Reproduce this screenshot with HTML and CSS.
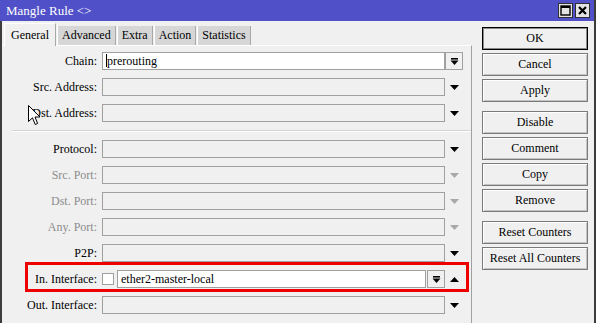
FILE: index.html
```html
<!DOCTYPE html>
<html lang="en">
<head>
    <meta charset="UTF-8">
    <title>Mangle Rule</title>
    <link rel="stylesheet" href="styles.css">
</head>
<body>
    <div class="window">
        <div class="titlebar">
            <span class="title">Mangle Rule &lt;&gt;</span>
            <div class="title-buttons">
                <span class="tbtn">
                    <svg width="11" height="11" viewBox="0 0 11 11"><rect x="1" y="1" width="9" height="9" fill="none" stroke="#000" stroke-width="1.4"/><rect x="1" y="1" width="9" height="2" fill="#000"/></svg>
                </span>
                <span class="tbtn">
                    <svg width="11" height="11" viewBox="0 0 11 11"><path d="M2 2 L9 9 M9 2 L2 9" stroke="#000" stroke-width="2.2"/></svg>
                </span>
            </div>
        </div>
        <div class="content">
            <div class="main">
                <div class="tabs">
                    <div class="tab active">General</div>
                    <div class="tab">Advanced</div>
                    <div class="tab">Extra</div>
                    <div class="tab">Action</div>
                    <div class="tab">Statistics</div>
                </div>
                <div class="panel">
                    <div class="row">
                        <label>Chain:</label>
                        <div class="field"><div class="input white"><span class="caret"></span>prerouting</div></div>
                        <div class="arrow"><span class="dropbtn"><svg width="9" height="9" viewBox="0 0 9 9"><rect x="1" y="1" width="7" height="1.6" fill="#000"/><path d="M0.5 3.5 H8.5 L4.5 8 Z" fill="#000"/></svg></span></div>
                    </div>
                    <div class="row">
                        <label>Src. Address:</label>
                        <div class="field"><div class="input"></div></div>
                        <div class="arrow"><svg width="9" height="5" viewBox="0 0 9 5"><path d="M0 0 H9 L4.5 5 Z" fill="#000"/></svg></div>
                    </div>
                    <div class="row">
                        <label>Dst. Address:</label>
                        <div class="field"><div class="input"></div></div>
                        <div class="arrow"><svg width="9" height="5" viewBox="0 0 9 5"><path d="M0 0 H9 L4.5 5 Z" fill="#000"/></svg></div>
                    </div>
                    <div class="separator"></div>
                    <div class="row">
                        <label>Protocol:</label>
                        <div class="field"><div class="input"></div></div>
                        <div class="arrow"><svg width="9" height="5" viewBox="0 0 9 5"><path d="M0 0 H9 L4.5 5 Z" fill="#000"/></svg></div>
                    </div>
                    <div class="row">
                        <label class="dim">Src. Port:</label>
                        <div class="field"><div class="input"></div></div>
                        <div class="arrow"><svg width="9" height="5" viewBox="0 0 9 5"><path d="M0 0 H9 L4.5 5 Z" fill="#a8a8a8"/></svg></div>
                    </div>
                    <div class="row">
                        <label class="dim">Dst. Port:</label>
                        <div class="field"><div class="input"></div></div>
                        <div class="arrow"><svg width="9" height="5" viewBox="0 0 9 5"><path d="M0 0 H9 L4.5 5 Z" fill="#a8a8a8"/></svg></div>
                    </div>
                    <div class="row">
                        <label class="dim">Any. Port:</label>
                        <div class="field"><div class="input"></div></div>
                        <div class="arrow"><svg width="9" height="5" viewBox="0 0 9 5"><path d="M0 0 H9 L4.5 5 Z" fill="#a8a8a8"/></svg></div>
                    </div>
                    <div class="row">
                        <label>P2P:</label>
                        <div class="field"><div class="input"></div></div>
                        <div class="arrow"><svg width="9" height="5" viewBox="0 0 9 5"><path d="M0 0 H9 L4.5 5 Z" fill="#000"/></svg></div>
                    </div>
                    <div class="row highlight">
                        <label>In. Interface:</label>
                        <div class="field">
                            <span class="checkbox"></span>
                            <div class="input white">ether2-master-local</div>
                            <span class="dropbtn"><svg width="9" height="9" viewBox="0 0 9 9"><rect x="1" y="1" width="7" height="1.6" fill="#000"/><path d="M0.5 3.5 H8.5 L4.5 8 Z" fill="#000"/></svg></span>
                        </div>
                        <div class="arrow"><svg width="9" height="5" viewBox="0 0 9 5"><path d="M0 5 H9 L4.5 0 Z" fill="#000"/></svg></div>
                    </div>
                    <div class="row">
                        <label>Out. Interface:</label>
                        <div class="field"><div class="input"></div></div>
                        <div class="arrow"><svg width="9" height="5" viewBox="0 0 9 5"><path d="M0 0 H9 L4.5 5 Z" fill="#000"/></svg></div>
                    </div>
                    <svg class="cursor" width="13" height="21" viewBox="0 0 13 21"><path d="M0.5 0.5 V16.5 L4.5 12.8 L7.2 19.5 L9.6 18.5 L7 12 H12 Z" fill="#fff" stroke="#000" stroke-width="1"/></svg>
                </div>
            </div>
            <div class="side">
                <button class="btn default">OK</button>
                <button class="btn">Cancel</button>
                <button class="btn">Apply</button>
                <button class="btn group">Disable</button>
                <button class="btn">Comment</button>
                <button class="btn">Copy</button>
                <button class="btn">Remove</button>
                <button class="btn group">Reset Counters</button>
                <button class="btn">Reset All Counters</button>
            </div>
        </div>
    </div>
</body>
</html>
```

FILE: styles.css
```css
body {
    margin: 0;
    font-family: "Liberation Serif", "Times New Roman", serif;
    font-size: 12px;
    color: #000;
}
.window {
    width: 596px;
    height: 323px;
    overflow: hidden;
    background: #f0f0f0;
}
.titlebar {
    height: 21px;
    background: #5050c8;
    display: flex;
    align-items: center;
    justify-content: space-between;
    padding: 0 4px 0 6px;
    border-right: 2px solid #3c3c3c;
}
.title {
    color: #fff;
    font-size: 13px;
}
.title-buttons {
    display: flex;
    gap: 2px;
}
.tbtn {
    width: 15px;
    height: 15px;
    box-sizing: border-box;
    background: #e4e4e4;
    border: 1px solid #303030;
    display: flex;
    align-items: center;
    justify-content: center;
}
.content {
    display: flex;
    height: 302px;
    border-left: 2px solid #3c3c3c;
    border-right: 2px solid #3c3c3c;
}
.main {
    width: 470px;
    display: flex;
    flex-direction: column;
}
.tabs {
    height: 24px;
    box-sizing: border-box;
    padding: 2px 0 0 2px;
    display: flex;
    align-items: flex-end;
}
.tab {
    height: 19px;
    box-sizing: border-box;
    padding: 0 4px;
    line-height: 18px;
    background: #d6d6d6;
    border-left: 1px solid #fff;
    border-right: 1px solid #a8a8a8;
    margin-right: 1px;
}
.tab.active {
    height: 23px;
    padding: 2px 6px 0;
    background: #f0f0f0;
    border-top: 1px solid #fff;
    margin-bottom: -1px;
    position: relative;
    z-index: 1;
}
.panel {
    flex: 1;
    position: relative;
    border-top: 1px solid #fff;
    border-right: 1px solid #a0a0a0;
    padding-top: 6px;
    display: flex;
    flex-direction: column;
    gap: 8px;
}
.row {
    display: grid;
    grid-template-columns: 100px 343px 18px;
    height: 18px;
    align-items: center;
}
.row label {
    text-align: right;
    padding-right: 5px;
    white-space: nowrap;
}
.row label.dim {
    color: #8c8c8c;
}
.field {
    display: flex;
    align-items: center;
    height: 18px;
}
.input {
    flex: 1;
    height: 18px;
    box-sizing: border-box;
    border: 1px solid #a0a0a0;
    padding-left: 3px;
    line-height: 16px;
    white-space: nowrap;
    overflow: hidden;
}
.input.white {
    background: #fff;
}
.caret {
    display: inline-block;
    width: 1px;
    height: 13px;
    background: #000;
    vertical-align: -2px;
}
.checkbox {
    width: 12px;
    height: 12px;
    box-sizing: border-box;
    border: 1px solid #a0a0a0;
    background: #fff;
    margin-right: 3px;
}
.dropbtn {
    width: 18px;
    height: 18px;
    box-sizing: border-box;
    border: 1px solid #a0a0a0;
    display: flex;
    align-items: center;
    justify-content: center;
}
.field .dropbtn {
    margin-left: 1px;
}
.arrow {
    display: flex;
    justify-content: center;
    align-items: center;
    height: 18px;
}
.separator {
    height: 0;
    margin-left: 10px;
    border-top: 1px solid #d4d4d4;
    border-bottom: 1px solid #fff;
}
.highlight {
    position: relative;
}
.highlight::after {
    content: "";
    position: absolute;
    left: 23px;
    top: -8px;
    width: 444px;
    height: 30px;
    box-sizing: border-box;
    border: 3px solid #ee0000;
}
.cursor {
    position: absolute;
    left: 26px;
    top: 59px;
}
.side {
    flex: 1;
    padding: 6px 6px 0 10px;
    display: flex;
    flex-direction: column;
    gap: 3px;
}
.btn {
    width: 106px;
    height: 23px;
    padding: 0;
    font-family: inherit;
    font-size: 12px;
    color: #000;
    background: #f0f0f0;
    border: 1px solid #7a7a7a;
    box-shadow: inset 1px 1px 0 #fff, inset -1px -1px 0 #c4c4c4;
}
.btn.default {
    border-color: #000;
    box-shadow: inset 0 0 0 1px #8a8a8a;
}
.btn.group {
    margin-top: 6px;
}
```
